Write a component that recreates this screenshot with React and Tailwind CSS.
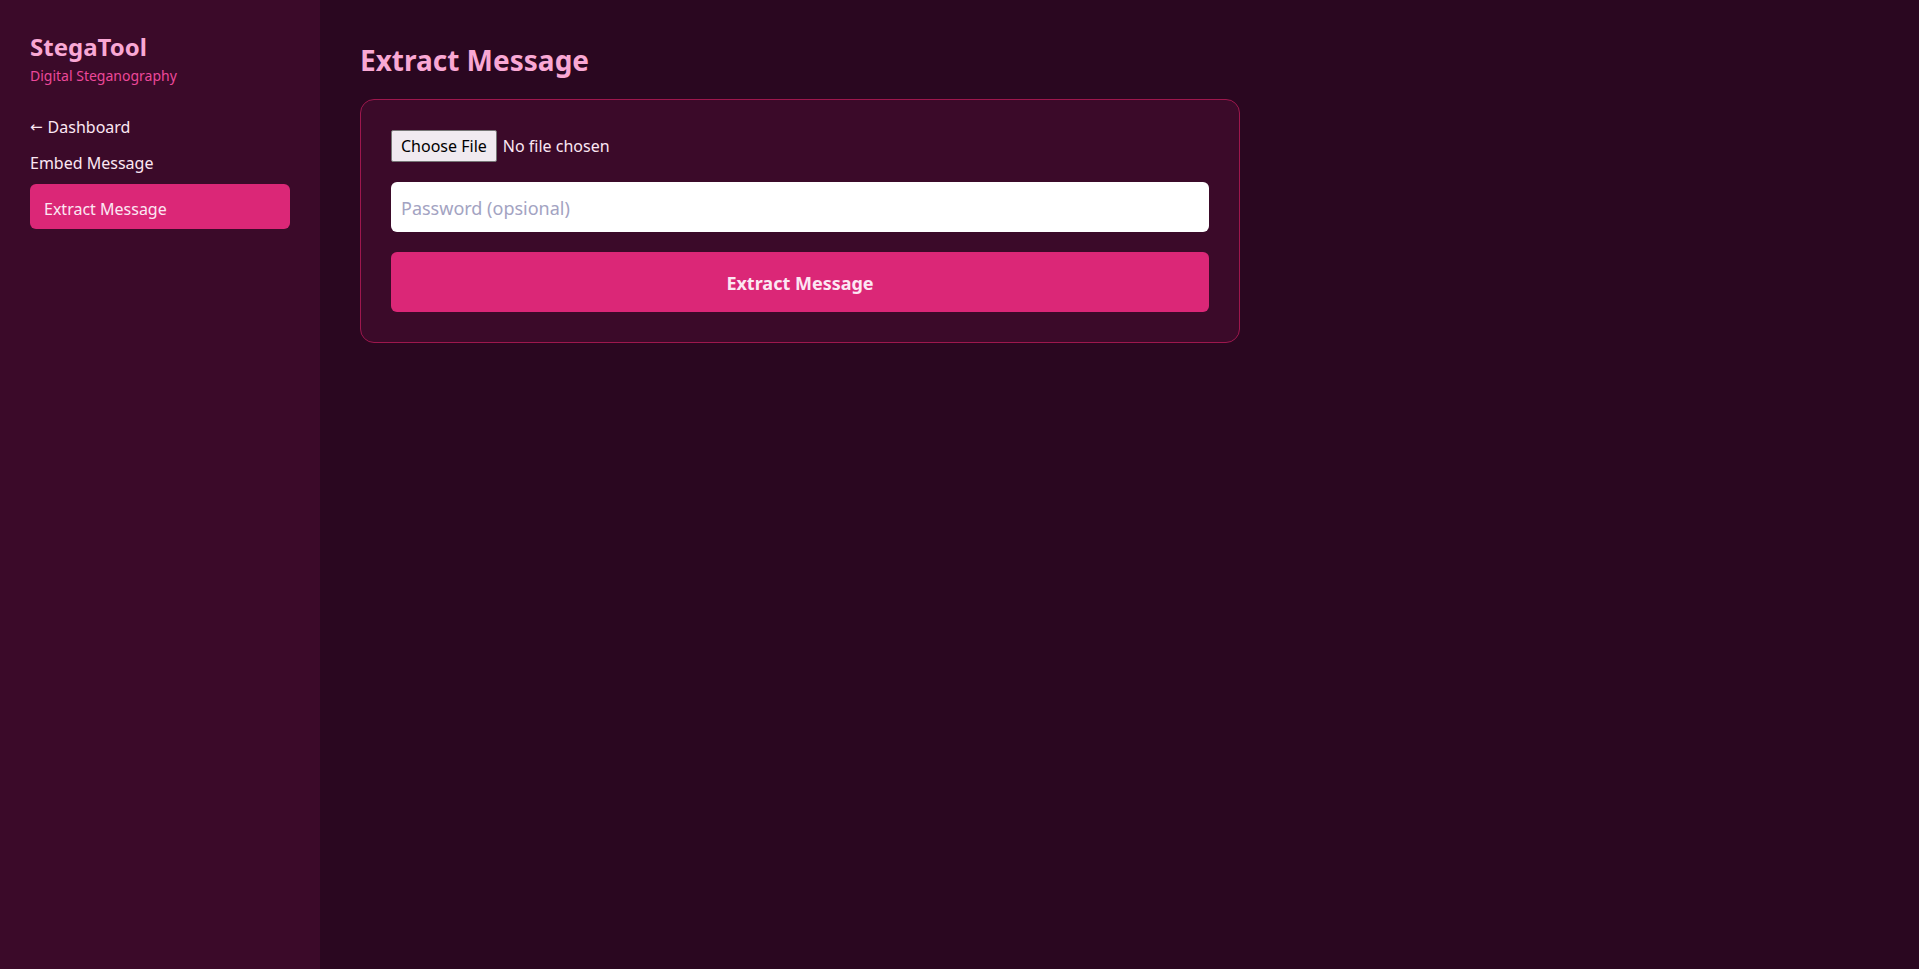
import { useState } from "react";

const Sidebar = () => {
  return (
    <aside className="w-80 shrink-0 bg-[#3b0a29] px-7.5 pt-[31px] pb-7.5">
      <h1 className="text-2xl leading-8 font-bold text-[#f9a8d4]">StegaTool</h1>
      <p className="mt-[3px] text-sm leading-5 text-[#ec4899]">Digital Steganography</p>

      <nav className="mt-[29px] flex flex-col text-[#fce7f3]">
        <a href="#" className="flex h-6 items-center leading-6">
          <span className="mr-[5px] font-['DejaVu_Sans',sans-serif] text-[15px] leading-none">←</span>
          Dashboard
        </a>
        <a href="#" className="mt-[12px] block leading-6">
          Embed Message
        </a>
        <a
          href="#"
          className="mt-[9px] block rounded-md bg-[#db2777] px-[14px] pt-[13px] pb-[8px] leading-6"
        >
          Extract Message
        </a>
      </nav>
    </aside>
  );
};

const App = () => {
  const [password, setPassword] = useState("");

  return (
    <div className="flex min-h-screen font-['Noto_Sans','Open_Sans',sans-serif]">
      <Sidebar />

      <main className="flex-1 bg-[#2a0720] p-10">
        <h2 className="mt-[2px] mb-[21px] text-[28px] leading-9 font-bold text-[#f9a8d4]">
          Extract Message
        </h2>

        {/* Extract form */}
        <div className="flex w-[880px] flex-col gap-5 rounded-[14px] border border-[#9d174d] bg-[#3b0a29] p-[30px]">
          <input
            type="file"
            className="h-8 text-base text-[#fce7f3] file:mr-[6px] file:h-8 file:cursor-pointer file:rounded-[2px] file:border file:border-[#767676] file:bg-[#f0eaf0] file:px-[9px] file:text-black"
          />

          <input
            type="password"
            value={password}
            onChange={(e) => setPassword(e.target.value)}
            placeholder="Password (opsional)"
            className="h-[50px] w-full rounded-md bg-white px-[10px] pt-[2px] text-lg text-gray-900 outline-none placeholder:text-[#a3a3c2]"
          />

          <button className="h-[60px] w-full rounded-md bg-[#db2777] pt-[2px] text-lg font-bold text-[#fce7f3]">
            Extract Message
          </button>
        </div>
      </main>
    </div>
  );
};

export default App;
